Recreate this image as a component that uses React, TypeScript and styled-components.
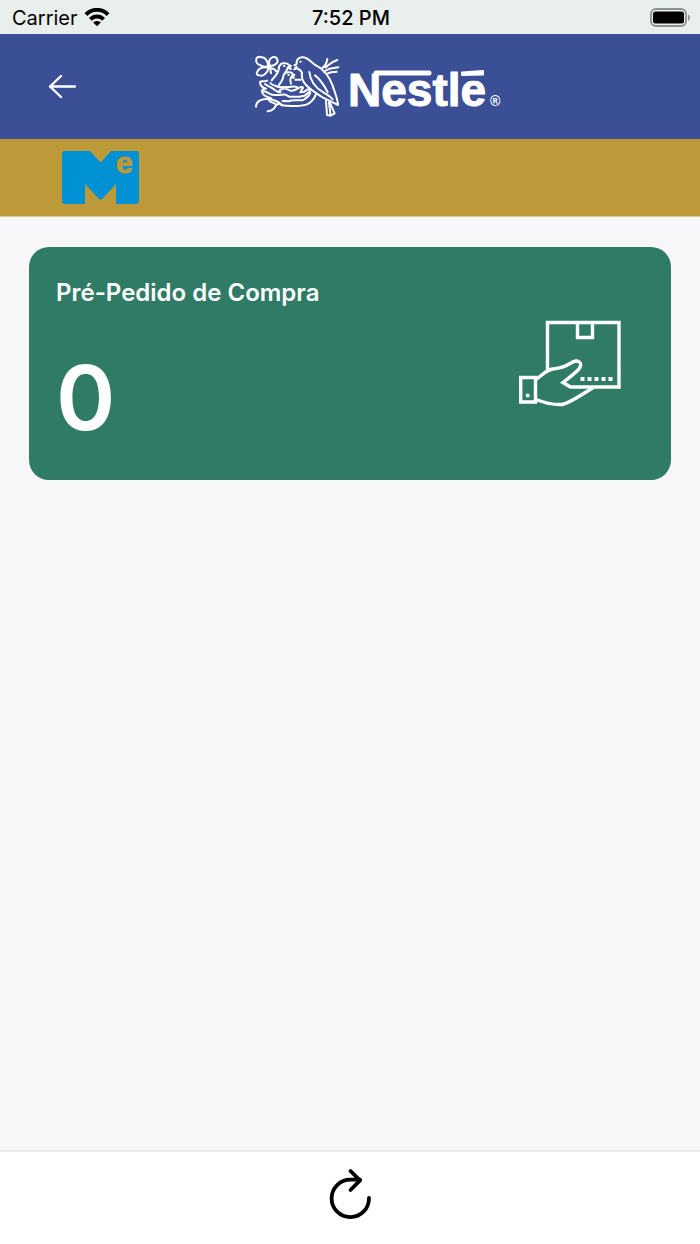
import React from "react";
import styled, { createGlobalStyle } from "styled-components";

const GlobalStyle = createGlobalStyle`
  *, *::before, *::after { box-sizing: border-box; }
  body {
    margin: 0;
    background: #f7f7fa;
    font-family: Inter, "Liberation Sans", sans-serif;
    color: #000;
  }
`;

const Screen = styled.div`
  display: flex;
  flex-direction: column;
  min-height: 100vh;
`;

const StatusBar = styled.div`
  display: grid;
  grid-template-columns: 1fr auto 1fr;
  align-items: center;
  height: 34px;
  padding: 2px 10px 0 12px;
  background: #e9efed;
  font-size: 20px;
  line-height: 24px;
`;

const Carrier = styled.div`
  display: flex;
  align-items: center;
  gap: 6px;
`;

const Clock = styled.time`
  font-weight: 500;
`;

const Battery = styled.svg`
  justify-self: end;
`;

const Header = styled.header`
  display: flex;
  align-items: center;
  height: 105px;
  padding: 0 20px 0 48px;
  background: #3b4f97;
`;

const IconButton = styled.button`
  display: flex;
  padding: 0;
  border: 0;
  background: none;
  color: inherit;
  cursor: pointer;
`;

const Brand = styled.div`
  display: flex;
  flex: 1;
  justify-content: center;
`;

const PartnerBar = styled.div`
  display: flex;
  align-items: center;
  height: 78px;
  padding: 0 62px;
  background: #bd9a39;
  border-bottom: 1px solid #d9c68f;
`;

const PartnerMark = styled.svg`
  overflow: visible;
`;

const Content = styled.main`
  flex: 1;
  padding: 30px 29px;
`;

const Card = styled.a`
  display: flex;
  justify-content: space-between;
  align-items: center;
  min-height: 233px;
  padding: 28px 50px 27px 27px;
  border-radius: 20px;
  background: #307b66;
  color: #fff;
  text-decoration: none;
`;

const CardText = styled.div`
  display: flex;
  flex-direction: column;
  align-self: stretch;
  gap: 32px;
`;

const CardTitle = styled.h2`
  margin: 0;
  font-size: 24px;
  line-height: 36px;
  font-weight: 600;
`;

const CardCount = styled.p`
  margin: 0;
  font-size: 90px;
  line-height: 110px;
  font-weight: 600;
`;

const Footer = styled.footer`
  display: flex;
  justify-content: center;
  align-items: center;
  height: 94px;
  padding-bottom: 8px;
  border-top: 2px solid #ebebed;
  background: #fff;
`;

const WifiIcon = () => (
  <svg width="26" height="20" viewBox="0 0 26 20" aria-label="Wi-Fi">
    <g fill="none" stroke="#000" strokeWidth="4">
      <path d="M2 6.600C8 .2 18 .2 24 6.600" />
      <path d="M6.400 11.300C10.200 7.500 15.800 7.500 19.600 11.300" />
    </g>
    <path d="M9.200 14.500C11.400 12.500 14.600 12.500 16.800 14.500L13 18.300Z" />
  </svg>
);

const BatteryIcon = () => (
  <Battery width="40" height="20" viewBox="0 0 40 20" aria-label="Bateria">
    <rect x="1" y="1" width="35" height="17" rx="5" fill="none" stroke="#8e9190" strokeWidth="1.8" />
    <rect x="3" y="3.5" width="31" height="12" rx="2.5" />
    <path d="M38 6.500c2.500.8 2.500 5.500 0 6.300z" fill="#8e9190" />
  </Battery>
);

const BackIcon = () => (
  <svg width="28" height="24" viewBox="0 0 28 24" aria-hidden="true">
    <path d="M27 11.500H2M13 1 2 11.500 13 22" fill="none" stroke="#fff" strokeWidth="2.400" strokeLinecap="round" strokeLinejoin="round" />
  </svg>
);

const NestleLogo = () => (
  <svg width="248" height="65" viewBox="254 54 248 65" role="img" aria-label="Nestlé">
    <clipPath id="wordmark">
      <path d="M345 60H460V80.500H490V112H345Z" />
    </clipPath>
    <g transform="translate(240 40) scale(.3333)" fill="none" stroke="#fff" strokeWidth="6" strokeLinecap="round" strokeLinejoin="round">
      <path d="M85 78C76 82 68 80 62 76C52 74 46 65 49 59C48 53 56 48 63 52C73 51 82 60 85 78Z" />
      <path d="M90 78C84 66 88 55 97 52C104 50 110 53 112 58C116 68 104 78 90 78Z" />
      <path d="M86 83C71 79 55 85 53 94C48 99 51 107 58 106C68 110 83 101 86 83Z" />
      <path d="M88 84C98 84 105 88 109 94M90 82 93 100" />
      <path d="M95 121C105 109 115 100 116 88C117 72 126 68 136 70C144 70 147 76 153 78L143 82M153 87 143 83M143 83C142 91 137 94 136 98M132 78H133" />
      <path d="M116 136C123 127 129 118 130 109C131 99 140 96 150 97C156 98 158 103 163 105L156 107L162 113L154 111C149 117 151 124 153 131M145 105H146" />
      <path d="M163 76 170 72C168 58 178 51 190 52C203 53 211 64 223 73C250 86 268 108 278 137C284 157 293 175 294 195C277 187 264 180 249 173C224 157 205 145 194 130C184 116 184 107 186 98C181 88 174 87 171 85L163 88L170 80M181 65H182" />
      <path d="M208 96C211 124 227 144 250 157C263 164 270 168 278 178M225 106C242 118 256 143 263 156" />
      <path d="M245 85C255 80 260 70 262 57M257 82C266 76 272 66 292 60M252 96C262 86 275 84 295 82M264 100C272 95 280 97 290 95" />
      <path d="M258 182 261 225 272 227 267 187M272 227 284 220 270 189" />
      <path d="M82 122C73 127 65 121 60 126C60 138 67 143 78 146C64 145 64 153 69 162C75 171 87 171 94 176M75 132C83 138 91 140 99 146C106 151 112 158 122 157M72 154C84 155 89 166 103 165H122" />
      <path d="M91 129C97 137 108 137 118 142L142 141C153 141 161 138 171 141M119 151C129 145 135 143 149 151C165 158 174 139 187 141C193 143 183 151 181 157L193 155C200 151 203 146 208 148C215 153 200 162 194 167L178 170H149C143 169 139 161 126 164" />
      <path d="M166 119H182M229 160C223 177 213 188 199 194C180 200 142 199 125 196C119 186 112 184 103 181C88 176 76 176 66 179C56 181 49 189 48 200M211 158C208 168 200 174 190 180C177 183 156 178 146 184L128 183" />
      <path d="M87 181C93 190 103 186 108 194C105 205 96 212 83 214M110 195C116 189 121 190 126 195" />
    </g>
    <g clipPath="url(#wordmark)">
      <text x="348" y="106" fill="#fff" stroke="#fff" strokeWidth="1" strokeLinejoin="round" fontFamily="'Liberation Sans', sans-serif" fontWeight="700" fontSize="46">Nestlé</text>
    </g>
    <path d="M376 73H429" stroke="#fff" strokeWidth="5" strokeLinecap="round" />
    <path d="M462 72.500 483 71V74.500L462 75Z" fill="#fff" stroke="#fff" strokeWidth="2" strokeLinejoin="round" />
    <text x="490" y="106" fill="#fff" fontFamily="'Liberation Sans', sans-serif" fontWeight="700" fontSize="14">®</text>
  </svg>
);

const MeLogo = () => (
  <PartnerMark width="77" height="54" viewBox="0 0 77 54" role="img" aria-label="Me">
    <rect width="77" height="53" rx="3" fill="#0090d4" />
    <path d="M28 0H49L40 10Q38.500 12 37 10Z" fill="#bd9a39" />
    <path d="M23 54V33L36 47Q38.500 50 41 47L54 33V54Z" fill="#bd9a39" />
    <text x="54" y="22" fill="#bd9a39" stroke="#bd9a39" strokeWidth="1" fontFamily="'Liberation Sans', sans-serif" fontWeight="700" fontSize="30">e</text>
  </PartnerMark>
);

const DeliveryIcon = () => (
  <svg width="102" height="88" viewBox="519 320 102 88" aria-hidden="true">
    <g fill="none" stroke="#fff" strokeWidth="3.400">
      <path d="M547.500 371V322.500H619V387H570.500L563 382.500C569 378 574 374 579 369C584 362 577 359 571 363C566 366 561 368 556 368.500C546 369 543 375 536.500 379" />
      <path d="M577.500 322.500V337.500H592.500V322.500" />
      <path d="M520.700 377.500H535.500V402H520.700Z" />
      <path d="M536 399.500C545 403 553 405 562 404.500C572 402 580 395 593 388" />
    </g>
    <path d="M580.500 379H612.500" stroke="#fff" strokeWidth="4" strokeDasharray="4 3" />
    <circle cx="527.700" cy="395.500" r="2" fill="#fff" />
  </svg>
);

const ReloadIcon = () => (
  <svg width="42" height="52" viewBox="329 1168 42 52" aria-hidden="true">
    <g fill="none" stroke="#000" strokeWidth="3.800" strokeLinecap="round" strokeLinejoin="round">
      <path d="M369 1198A18.700 18.700 0 1 1 350.500 1179.700H360" />
      <path d="M350.500 1171 360 1180.300 350.500 1190" />
    </g>
  </svg>
);

export default function App() {
  return (
    <>
      <GlobalStyle />
      <Screen>
        <StatusBar>
          <Carrier>
            <span>Carrier</span>
            <WifiIcon />
          </Carrier>
          <Clock>7:52 PM</Clock>
          <BatteryIcon />
        </StatusBar>
        <Header>
          <IconButton type="button" aria-label="Voltar">
            <BackIcon />
          </IconButton>
          <Brand>
            <NestleLogo />
          </Brand>
        </Header>
        <PartnerBar>
          <MeLogo />
        </PartnerBar>
        <Content>
          <Card href="#pre-pedidos">
            <CardText>
              <CardTitle>Pré-Pedido de Compra</CardTitle>
              <CardCount>0</CardCount>
            </CardText>
            <DeliveryIcon />
          </Card>
        </Content>
        <Footer>
          <IconButton type="button" aria-label="Atualizar">
            <ReloadIcon />
          </IconButton>
        </Footer>
      </Screen>
    </>
  );
}
